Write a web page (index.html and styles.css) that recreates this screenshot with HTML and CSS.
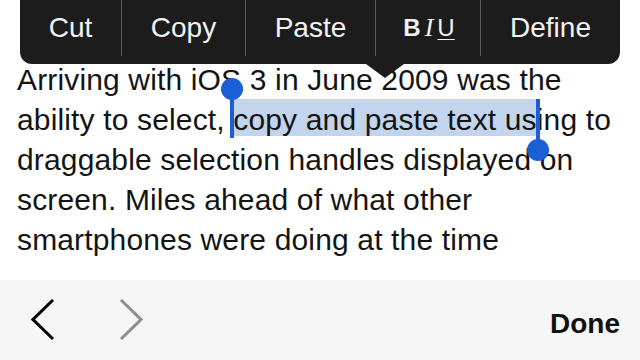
FILE: index.html
```html
<!DOCTYPE html>
<html>
<head>
<meta charset="utf-8">
<link rel="stylesheet" href="styles.css">
</head>
<body>
<div class="page">
  <div class="content">
    <div class="menu">
      <div class="item item-cut">Cut</div>
      <div class="item item-copy">Copy</div>
      <div class="item item-paste">Paste</div>
      <div class="item item-biu"><span class="b">B</span><span class="i">I</span><span class="u">U</span></div>
      <div class="item item-define">Define</div>
      <div class="arrow"></div>
    </div>
    <p class="text">Arriving with iOS 3 in June 2009 was the<br>ability to select, <span class="sel"><span class="handle handle-start"><span class="knob"></span></span>copy and paste text us<span class="handle handle-end"><span class="knob"></span></span></span>ing to<br>draggable selection handles displayed on<br>screen. Miles ahead of what other<br>smartphones were doing at the time</p>
  </div>
  <div class="toolbar">
    <svg class="chev" width="24" height="42" viewBox="0 0 24 42"><polyline points="22,1 2,20.5 22,40" fill="none" stroke="#000" stroke-width="3"/></svg>
    <svg class="chev chev-next" width="24" height="42" viewBox="0 0 24 42"><polyline points="2,1 22,20.5 2,40" fill="none" stroke="#8e8e8e" stroke-width="3"/></svg>
    <div class="spacer"></div>
    <div class="done">Done</div>
  </div>
</div>
</body>
</html>
```

FILE: styles.css
```css
html, body {
  margin: 0;
  padding: 0;
  background: #ffffff;
}
.page {
  width: 640px;
  height: 360px;
  display: flex;
  flex-direction: column;
  overflow: hidden;
  font-family: "Liberation Sans", Arial, sans-serif;
}
.content {
  position: relative;
  height: 280px;
  background: #ffffff;
}
.text {
  margin: 0;
  padding: 60px 0 0 17px;
  font-size: 30px;
  line-height: 40px;
  letter-spacing: 0.15px;
  color: #141414;
  white-space: nowrap;
}
.sel {
  position: relative;
  background: #c3d5ec;
  padding-top: 4px;
}
.handle {
  position: absolute;
  width: 4px;
  background: #1b5ed6;
}
.handle-start {
  left: -3px;
  top: -9px;
  height: 48px;
}
.handle-end {
  right: -3px;
  top: 0;
  height: 49px;
}
.knob {
  position: absolute;
  left: -9px;
  width: 22px;
  height: 22px;
  border-radius: 50%;
  background: #1b5ed6;
}
.handle-start .knob { top: -12px; }
.handle-end .knob { top: 40px; }

.menu {
  position: absolute;
  left: 20px;
  top: -12px;
  width: 600px;
  height: 76px;
  background: #1c1c1c;
  border-radius: 12px;
  display: flex;
  z-index: 2;
}
.item {
  height: 56px;
  padding-top: 12px;
  line-height: 56px;
  font-size: 28px;
  color: #f2f2f2;
  text-align: center;
  box-sizing: content-box;
}
.item + .item {
  border-left: 1px solid #5a5a5a;
}
.item-cut { width: 101px; }
.item-copy { width: 123px; }
.item-paste { width: 129px; }
.item-biu {
  width: 105px;
  font-size: 24px;
  display: flex;
  justify-content: center;
  gap: 4px;
  padding-left: 2px;
  box-sizing: border-box;
  height: 68px;
}
.item-define { flex: 1; }
.b { font-weight: bold; }
.i {
  font-family: "Liberation Serif", "Times New Roman", serif;
  font-style: italic;
  font-size: 26px;
}
.u { text-decoration: underline; text-underline-offset: 3px; text-decoration-thickness: 1px; }
.arrow {
  position: absolute;
  left: 346px;
  top: 76px;
  width: 0;
  height: 0;
  border-left: 19px solid transparent;
  border-right: 19px solid transparent;
  border-top: 14px solid #1c1c1c;
}

.toolbar {
  height: 80px;
  background: #f6f6f6;
  display: flex;
  align-items: center;
  padding: 0 20px 0 31px;
  box-sizing: border-box;
}
.chev { display: block; }
.chev-next { margin-left: 64px; }
.spacer { flex: 1; }
.done {
  font-size: 28px;
  font-weight: bold;
  color: #111111;
  padding-top: 7px;
}
```
